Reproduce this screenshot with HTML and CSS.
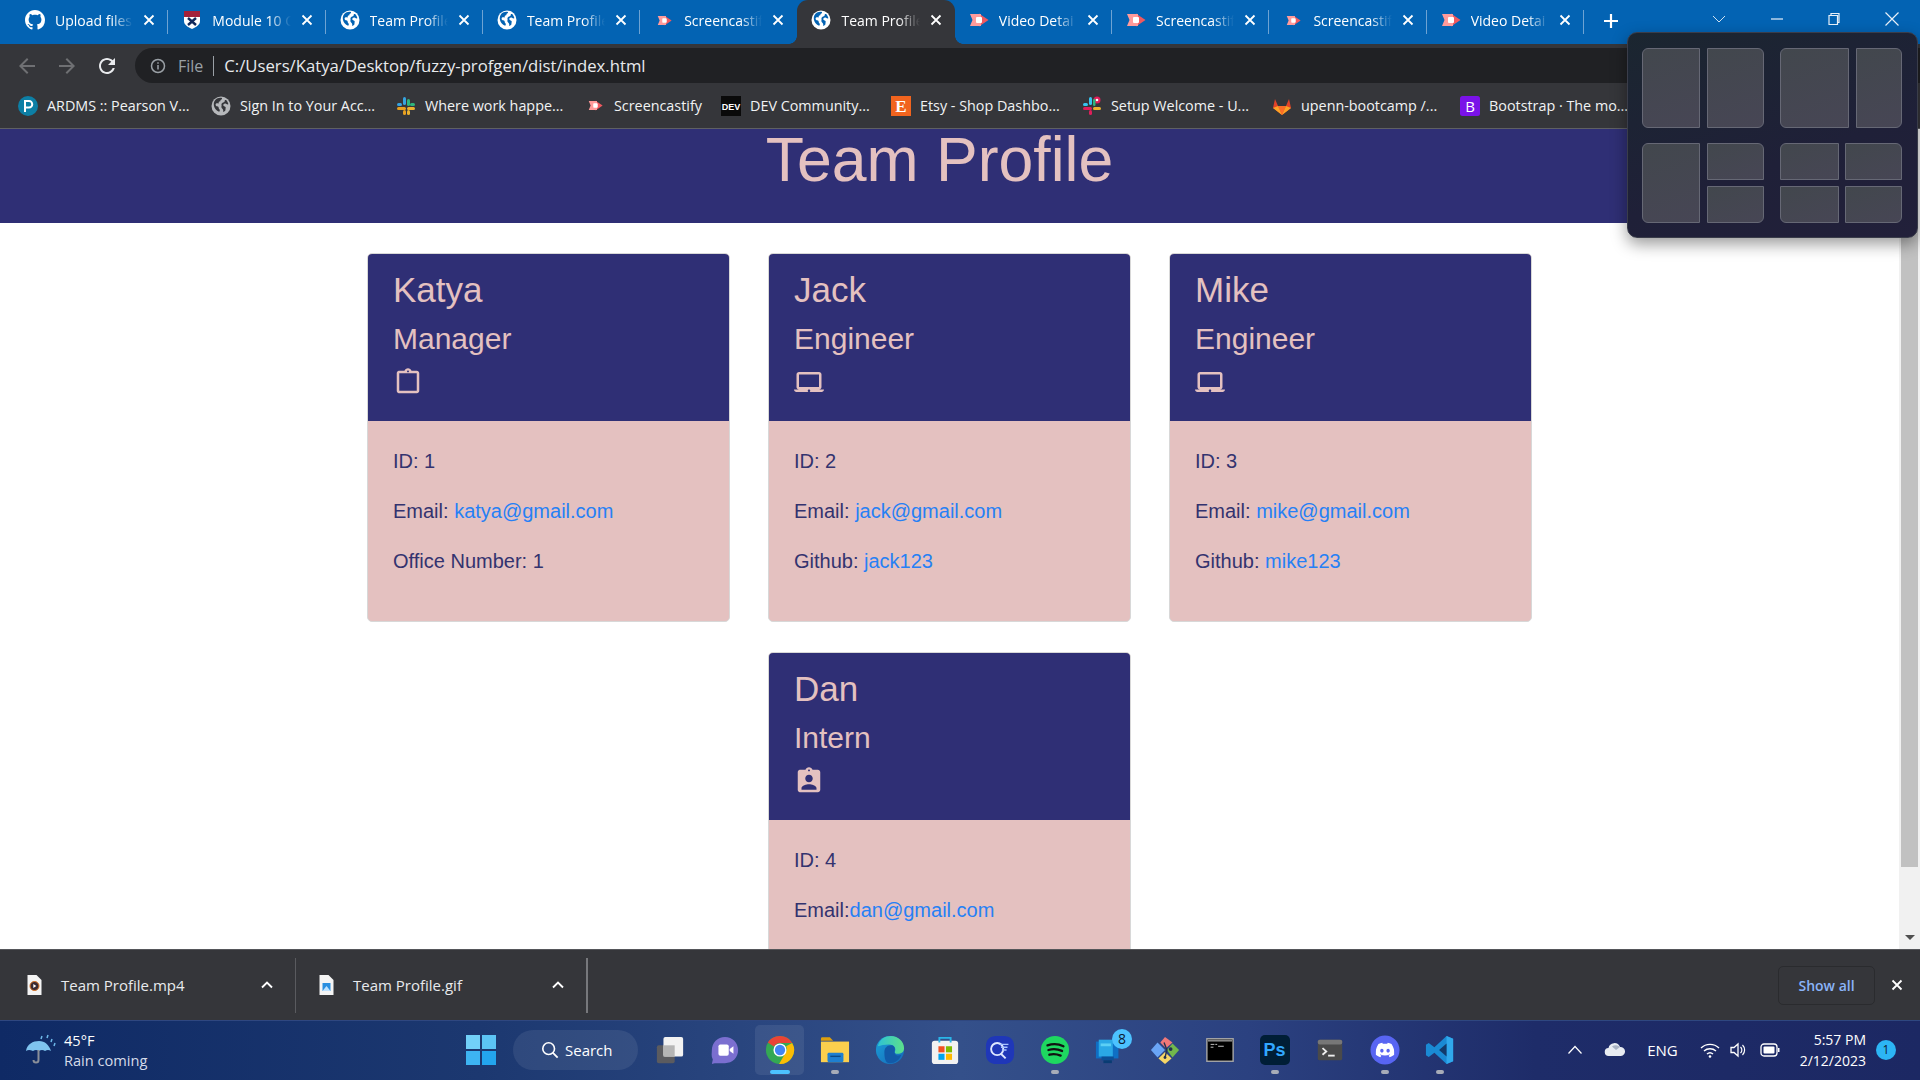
FILE: index.html
```html
<!DOCTYPE html>
<html lang="en">
<head>
<meta charset="utf-8">
<title>Team Profile</title>
<link rel="stylesheet" href="styles.css">
</head>
<body>
<svg class="sprite" xmlns="http://www.w3.org/2000/svg">
  <symbol id="i-github" viewBox="0 0 16 16"><path fill="#fff" d="M8 0C3.58 0 0 3.58 0 8c0 3.54 2.29 6.53 5.47 7.59.4.07.55-.17.55-.38 0-.19-.01-.82-.01-1.49-2.01.37-2.53-.49-2.69-.94-.09-.23-.48-.94-.82-1.13-.28-.15-.68-.52-.01-.53.63-.01 1.08.58 1.23.82.72 1.21 1.87.87 2.33.66.07-.52.28-.87.51-1.07-1.78-.2-3.64-.89-3.64-3.95 0-.87.31-1.59.82-2.15-.08-.2-.36-1.02.08-2.12 0 0 .67-.21 2.2.82.64-.18 1.32-.27 2-.27.68 0 1.36.09 2 .27 1.53-1.04 2.2-.82 2.2-.82.44 1.1.16 1.92.08 2.12.51.56.82 1.27.82 2.15 0 3.07-1.87 3.75-3.65 3.95.29.25.54.73.54 1.48 0 1.07-.01 1.93-.01 2.2 0 .21.15.46.55.38A8.013 8.013 0 0016 8c0-4.42-3.58-8-8-8z"/></symbol>
  <symbol id="i-globe" viewBox="0 0 20 20"><circle cx="10" cy="10" r="9.5" fill="currentColor"/><path fill="var(--land,#0363b3)" d="M6 2.5c2-.9 3.6-1 5-.6.3 1-.5 1.7-1.600 2 .4.9-.3 1.600-1.300 1.700-.6.6-.5 1.300-.1 1.800-1-.1-1.800-.5-2.500-.1-1 .5-1.200 1.700-.5 2.500.7.7 1.700.5 2.300 1 .6.600.2 1.300.7 2 .4.600.9.800.8 1.600-.1.600-.3 1-.7 1.300-2.500-.8-5-3.700-5.300-6.700C2.500 6.300 3.700 3.900 6 2.500zM15 4c1.300 1 2 2.700 2.400 4.300-.9.300-1.700-.2-2.400-.5-.9-.4-1.800-.2-2.400.4-.5.500-.3 1.400.2 1.900.5.500 1.300.5 1.700 1 .4.600.1 1.300 0 2-.1.600.1 1.200-.3 1.700-.6.500-1.300 1-2.100 1.200.2-1 .3-2-.3-2.800-.5-.7-1.300-1-1.400-1.900-.1-.8.200-1.500.200-2.200-.6-1 .3-1.800 1-2.300.7-.5 1.800-.4 2-1.300.1-.7.100-1 .4-1.500z"/></symbol>
  <symbol id="i-cast" viewBox="0 0 20 20"><path fill="#f0595f" d="M10 3.500L19.500 10 10 16.500z"/><path fill="#ff9b9b" d="M1 4h11v12H1l2.500-6z"/><rect x="7" y="7" width="6" height="6" rx="1" fill="#fff"/></symbol>
  <symbol id="i-close" viewBox="0 0 12 12"><path d="M1.500 1.500l9 9M10.500 1.500l-9 9" stroke="#fff" stroke-width="1.800" fill="none"/></symbol>
  <symbol id="i-laptop" viewBox="0 0 24 24"><path fill="currentColor" d="M20 18c1.100 0 1.990-.9 1.990-2L22 6c0-1.100-.9-2-2-2H4c-1.100 0-2 .9-2 2v10c0 1.100.9 2 2 2H0c0 1.100.9 2 2 2h20c1.100 0 2-.9 2-2h-4zM4 6h16v10H4V6zm8 14c-.55 0-1-.45-1-1s.45-1 1-1 1 .45 1 1-.45 1-1 1z"/></symbol>
  <symbol id="i-clip" viewBox="0 0 24 24"><path fill="currentColor" d="M19 3h-4.180C14.400 1.840 13.300 1 12 1c-1.300 0-2.400.84-2.820 2H5c-.14 0-.27.01-.4.04-.39.08-.74.28-1.010.55-.18.18-.33.4-.43.64-.1.23-.16.49-.16.77v14c0 .27.06.54.16.78s.25.45.43.64c.27.27.62.47 1.010.55.13.02.26.03.4.03h14c1.100 0 2-.9 2-2V5c0-1.100-.9-2-2-2zm-7-.25c.41 0 .75.34.75.75s-.34.75-.75.75-.75-.34-.75-.75.34-.75.75-.75zM19 19H5V5h14v14z"/></symbol>
  <symbol id="i-badge" viewBox="0 0 24 24"><path fill="currentColor" d="M19 3h-4.180C14.400 1.840 13.300 1 12 1c-1.300 0-2.400.84-2.820 2H5c-.14 0-.27.01-.4.04-.39.08-.74.28-1.010.55-.18.18-.33.4-.43.64-.1.23-.16.49-.16.77v14c0 .27.06.54.16.78s.25.45.43.64c.27.27.62.47 1.010.55.13.02.26.03.4.03h14c1.100 0 2-.9 2-2V5c0-1.100-.9-2-2-2zm-7-.25c.41 0 .75.34.75.75s-.34.75-.75.75-.75-.34-.75-.75.34-.75.75-.75zM12 7c1.660 0 3 1.340 3 3s-1.340 3-3 3-3-1.340-3-3 1.340-3 3-3zm6 12H6v-1.400c0-2 4-3.100 6-3.100s6 1.100 6 3.100V19z"/></symbol>
  <symbol id="i-up" viewBox="0 0 16 16"><path d="M3 10.500L8 5.500l5 5" stroke="#fff" stroke-width="1.900" fill="none"/></symbol>
</svg>

<div class="screen">
  <header class="tabstrip">
    <div class="tab"><svg class="fav"><use href="#i-github"/></svg><span class="tab-title">Upload files</span><svg class="tab-x"><use href="#i-close"/></svg></div>
    <div class="tab"><svg class="fav" viewBox="0 0 20 20"><path fill="#fff" d="M2 1h16v10c0 4-4 6-8 8-4-2-8-4-8-8z"/><rect x="2" y="1" width="16" height="6" fill="#a3213b"/><path d="M6 15l8-7M14 15L6 8" stroke="#12295c" stroke-width="2.400"/></svg><span class="tab-title">Module 10 C</span><svg class="tab-x"><use href="#i-close"/></svg></div>
    <div class="tab"><svg class="fav globe"><use href="#i-globe"/></svg><span class="tab-title">Team Profile</span><svg class="tab-x"><use href="#i-close"/></svg></div>
    <div class="tab"><svg class="fav globe"><use href="#i-globe"/></svg><span class="tab-title">Team Profile</span><svg class="tab-x"><use href="#i-close"/></svg></div>
    <div class="tab tab-before-active"><svg class="fav fav-sm"><use href="#i-cast"/></svg><span class="tab-title">Screencastif</span><svg class="tab-x"><use href="#i-close"/></svg></div>
    <div class="tab tab-active"><svg class="fav globe"><use href="#i-globe"/></svg><span class="tab-title">Team Profile</span><svg class="tab-x"><use href="#i-close"/></svg></div>
    <div class="tab"><svg class="fav"><use href="#i-cast"/></svg><span class="tab-title">Video Detai</span><svg class="tab-x"><use href="#i-close"/></svg></div>
    <div class="tab"><svg class="fav"><use href="#i-cast"/></svg><span class="tab-title">Screencastif</span><svg class="tab-x"><use href="#i-close"/></svg></div>
    <div class="tab"><svg class="fav fav-sm"><use href="#i-cast"/></svg><span class="tab-title">Screencastif</span><svg class="tab-x"><use href="#i-close"/></svg></div>
    <div class="tab"><svg class="fav"><use href="#i-cast"/></svg><span class="tab-title">Video Detai</span><svg class="tab-x"><use href="#i-close"/></svg></div>
    <svg class="newtab" viewBox="0 0 16 16"><path d="M8 1v14M1 8h14" stroke="#fff" stroke-width="2.200"/></svg>
    <div class="winctl">
      <svg class="win-icon" viewBox="0 0 16 16"><path d="M2 5l6 6 6-6" stroke="#cfe0f0" stroke-width="1" fill="none"/></svg>
      <svg class="win-icon" viewBox="0 0 16 16"><path d="M2 8h12" stroke="#e8f0f8" stroke-width="1.200"/></svg>
      <svg class="win-icon" viewBox="0 0 16 16"><path d="M3 4.500h8.500v9H3z M5 4.500V2.500h8v9h-1.500" stroke="#e8f0f8" stroke-width="1.200" fill="none"/></svg>
      <svg class="win-icon" viewBox="0 0 16 16"><path d="M1.500 1.500l13 13M14.500 1.500l-13 13" stroke="#e8f0f8" stroke-width="1.200"/></svg>
    </div>
  </header>

  <div class="toolbar">
    <svg class="nav" viewBox="0 0 24 24"><path fill="#6f7073" d="M20 11H7.830l5.590-5.590L12 4l-8 8 8 8 1.410-1.410L7.830 13H20v-2z"/></svg>
    <svg class="nav" viewBox="0 0 24 24"><path fill="#6f7073" d="M12 4l-1.410 1.410L16.170 11H4v2h12.170l-5.580 5.590L12 20l8-8z"/></svg>
    <svg class="nav" viewBox="0 0 24 24"><path fill="#e8eaed" d="M17.650 6.350C16.200 4.900 14.210 4 12 4c-4.420 0-7.990 3.580-7.990 8s3.570 8 7.990 8c3.730 0 6.840-2.550 7.730-6h-2.080c-.82 2.330-3.040 4-5.650 4-3.310 0-6-2.690-6-6s2.690-6 6-6c1.660 0 3.140.69 4.220 1.780L13 11h7V4l-2.350 2.350z"/></svg>
    <div class="omnibox">
      <svg class="info" viewBox="0 0 16 16"><circle cx="8" cy="8" r="6.500" stroke="#9aa0a6" stroke-width="1.500" fill="none"/><path d="M8 7v4.500M8 4.300v1.400" stroke="#9aa0a6" stroke-width="1.500"/></svg>
      <span class="scheme">File</span>
      <span class="omni-sep"></span>
      <span class="url">C:/Users/Katya/Desktop/fuzzy-profgen/dist/index.html</span>
    </div>
  </div>

  <nav class="bookmarks">
    <div class="bm"><svg class="bm-ico" viewBox="0 0 20 20"><circle cx="10" cy="10" r="10" fill="#0d7fa5"/><path d="M7 16V5h4a3.200 3.200 0 010 6.500H7" stroke="#fff" stroke-width="2" fill="none"/></svg><span>ARDMS :: Pearson V...</span></div>
    <div class="bm"><svg class="bm-ico globe-gray"><use href="#i-globe"/></svg><span>Sign In to Your Acc...</span></div>
    <div class="bm"><svg class="bm-ico" viewBox="0 0 20 20"><rect x="7" y="1" width="3" height="8" rx="1.500" fill="#36a3e0"/><rect x="1" y="7" width="5" height="3" rx="1.500" fill="#36a3e0"/><rect x="11" y="3" width="3" height="7" rx="1.500" fill="#2eb67d"/><rect x="14" y="7" width="5" height="3" rx="1.500" fill="#2eb67d"/><rect x="11" y="11" width="8" height="3" rx="1.500" fill="#ecb22e"/><rect x="11" y="14" width="3" height="5" rx="1.500" fill="#ecb22e"/><rect x="1" y="11" width="9" height="3" rx="1.500" fill="#e8a020"/><rect x="7" y="14" width="3" height="5" rx="1.500" fill="#e8a020"/></svg><span>Where work happe...</span></div>
    <div class="bm"><svg class="bm-ico bm-ico-sm"><use href="#i-cast"/></svg><span>Screencastify</span></div>
    <div class="bm"><svg class="bm-ico" viewBox="0 0 20 20"><rect width="20" height="20" fill="#0a0a0a"/><text x="10" y="13.500" text-anchor="middle" class="dev-mark">DEV</text></svg><span>DEV Community...</span></div>
    <div class="bm"><svg class="bm-ico" viewBox="0 0 20 20"><rect width="20" height="20" fill="#f1641e"/><text x="10" y="16" text-anchor="middle" class="etsy-mark">E</text></svg><span>Etsy - Shop Dashbo...</span></div>
    <div class="bm"><svg class="bm-ico" viewBox="0 0 20 20"><rect x="7" y="1" width="3" height="8" rx="1.500" fill="#36c5f0"/><rect x="1" y="7" width="5" height="3" rx="1.500" fill="#36c5f0"/><circle cx="15" cy="4" r="3.500" fill="#e01e5a"/><circle cx="15" cy="4" r="1.300" fill="#fff"/><rect x="11" y="3" width="2.500" height="7" rx="1.200" fill="#2eb67d"/><rect x="11" y="11" width="8" height="3" rx="1.500" fill="#ecb22e"/><rect x="1" y="11" width="9" height="3" rx="1.500" fill="#e01e5a"/><rect x="7" y="14" width="3" height="5" rx="1.500" fill="#e01e5a"/></svg><span>Setup Welcome - U...</span></div>
    <div class="bm"><svg class="bm-ico" viewBox="0 0 20 20"><path fill="#e24329" d="M10 19L1 12l2-9 3 7h8l3-7 2 9z"/><path fill="#fc6d26" d="M10 19L6 10h8z"/><path fill="#fca326" d="M1 12l9 7-4-9zM19 12l-9 7 4-9z"/></svg><span>upenn-bootcamp /...</span></div>
    <div class="bm"><svg class="bm-ico" viewBox="0 0 20 20"><rect width="20" height="20" rx="2.500" fill="#7a12e8"/><text x="10" y="15.500" text-anchor="middle" class="bs-mark">B</text></svg><span>Bootstrap · The mo...</span></div>
  </nav>

  <div class="viewport">
    <main class="page">
      <div class="banner"><h1 class="banner-title">Team Profile</h1></div>
      <div class="cards">
        <article class="card">
          <div class="card-head">
            <h3 class="card-name">Katya</h3>
            <h4 class="card-role">Manager</h4>
            <svg class="role-icon"><use href="#i-clip"/></svg>
          </div>
          <div class="card-body">
            <p>ID: 1</p>
            <p>Email: <a href="#">katya@gmail.com</a></p>
            <p>Office Number: 1</p>
          </div>
        </article>
        <article class="card">
          <div class="card-head">
            <h3 class="card-name">Jack</h3>
            <h4 class="card-role">Engineer</h4>
            <svg class="role-icon"><use href="#i-laptop"/></svg>
          </div>
          <div class="card-body">
            <p>ID: 2</p>
            <p>Email: <a href="#">jack@gmail.com</a></p>
            <p>Github: <a href="#">jack123</a></p>
          </div>
        </article>
        <article class="card">
          <div class="card-head">
            <h3 class="card-name">Mike</h3>
            <h4 class="card-role">Engineer</h4>
            <svg class="role-icon"><use href="#i-laptop"/></svg>
          </div>
          <div class="card-body">
            <p>ID: 3</p>
            <p>Email: <a href="#">mike@gmail.com</a></p>
            <p>Github: <a href="#">mike123</a></p>
          </div>
        </article>
        <article class="card">
          <div class="card-head">
            <h3 class="card-name">Dan</h3>
            <h4 class="card-role">Intern</h4>
            <svg class="role-icon"><use href="#i-badge"/></svg>
          </div>
          <div class="card-body">
            <p>ID: 4</p>
            <p>Email:<a href="#">dan@gmail.com</a></p>
          </div>
        </article>
      </div>
    </main>
    <div class="scrollbar">
      <div class="scroll-track"><div class="scroll-thumb"></div></div>
      <div class="scroll-down"></div>
    </div>
  </div>

  <div class="downloads">
    <div class="dl dl-first">
      <svg class="dl-ico" viewBox="0 0 14 20"><path fill="#f4f4f4" d="M0 0h9l5 5v15H0z"/><circle cx="7" cy="11" r="4.500" fill="#3a2a33" stroke="#d9701f" stroke-width="1"/><path d="M5.800 9v4l3-2z" fill="#fff"/></svg>
      <span class="dl-name">Team Profile.mp4</span>
      <svg class="dl-up"><use href="#i-up"/></svg>
    </div>
    <div class="dl dl-second">
      <svg class="dl-ico" viewBox="0 0 14 20"><path fill="#f4f4f4" d="M0 0h9l5 5v15H0z"/><rect x="3" y="8" width="8" height="8" fill="#2a8fe0"/><path d="M3 16l4-5 4 5z" fill="#bfe3ff"/></svg>
      <span class="dl-name">Team Profile.gif</span>
      <svg class="dl-up"><use href="#i-up"/></svg>
    </div>
    <div class="dl-right">
      <button class="show-all">Show all</button>
      <svg class="dl-close"><use href="#i-close"/></svg>
    </div>
  </div>

  <footer class="taskbar">
    <div class="weather">
      <svg class="weather-ico" viewBox="0 0 32 32"><path d="M2 17C3 10 9 7 15 7s10 4 12 10c-2-1.500-4-1.500-6 0-2-1.500-4-1.500-6 0-2-1.500-4-1.500-6 0-3-1.500-5-1.500-7 0z" fill="#7fc4ef"/><path d="M14.500 16v10a2.500 2.500 0 01-5 0" stroke="#8a8f99" stroke-width="2" fill="none"/><path d="M18 2l-1 3M24 1l-1 3M28 5l-1 3M31 9l-1 3" stroke="#6eb8e8" stroke-width="1.500"/></svg>
      <div class="weather-text"><span class="w-temp">45°F</span><span class="w-desc">Rain coming</span></div>
    </div>
    <svg class="start" viewBox="0 0 30 30"><rect width="14" height="14" fill="#72d0f8"/><rect x="16" width="14" height="14" fill="#5cc4f5"/><rect y="16" width="14" height="14" fill="#3db4f2"/><rect x="16" y="16" width="14" height="14" fill="#23a5ee"/></svg>
    <div class="search"><svg class="search-ico" viewBox="0 0 20 20"><circle cx="8.500" cy="8.500" r="6.500" stroke="#fff" stroke-width="1.800" fill="none"/><path d="M13 13l5.500 5.500" stroke="#fff" stroke-width="2"/></svg><span>Search</span></div>
    <div class="apps">
      <div class="app"><svg class="app-ico" viewBox="0 0 32 32"><rect x="2" y="11" width="19" height="19" rx="2" fill="#5b5b5f"/><rect x="9" y="2" width="21" height="21" rx="2" fill="#f2f2f2"/><rect x="9" y="11" width="12" height="12" fill="#b5b5b5"/></svg></div>
      <div class="app"><svg class="app-ico" viewBox="0 0 32 32"><path d="M16 2c8 0 14 6 14 14s-6 14-14 14H5l-3 1 1-5C1 23 2 19 2 16 2 8 8 2 16 2z" fill="#7b6fd0"/><rect x="9" y="10" width="11" height="12" rx="2" fill="#fff"/><path d="M21 15l4-3v8l-4-3z" fill="#fff"/></svg></div>
      <div class="app app-active"><svg class="app-ico" viewBox="0 0 32 32"><circle cx="16" cy="16" r="15" fill="#34a853"/><path d="M16 1a15 15 0 0113 7.500H16a7.500 7.500 0 00-6.500 3.750L3 8A15 15 0 0116 1z" fill="#ea4335"/><path d="M29 8.500A15 15 0 0115 31l6.500-11.250A7.500 7.500 0 0022.500 12z" fill="#fbbc05"/><circle cx="16" cy="16" r="7" fill="#fff"/><circle cx="16" cy="16" r="5.500" fill="#4285f4"/></svg></div>
      <div class="app app-run"><svg class="app-ico" viewBox="0 0 32 32"><path d="M1 4a1.500 1.500 0 011.500-1.500h8L14 6h-13z" fill="#dd9f0e"/><path d="M1 7h30v22H1z" fill="#fbcf4d"/><rect x="8" y="19" width="17" height="10" rx="1.500" fill="#1e7fd0"/><rect x="11" y="22" width="11" height="1.500" fill="#0c4a86"/></svg></div>
      <div class="app"><svg class="app-ico" viewBox="0 0 32 32"><defs><linearGradient id="edge-a" x1="0" y1="0" x2="1" y2="1"><stop offset="0" stop-color="#1aa0d8"/><stop offset="1" stop-color="#1668b8"/></linearGradient><linearGradient id="edge-b" x1="0" y1="0" x2="1" y2="0"><stop offset="0" stop-color="#2fc2d4"/><stop offset="1" stop-color="#5de08a"/></linearGradient></defs><circle cx="16" cy="16" r="15" fill="url(#edge-a)"/><path d="M3 12C5 4 11 1 17 1c8 0 14 6 14 13 0 4-3 6-7 6-2 0-3-1-3-2 2-3 0-8-6-8-5 0-9 1-12 2z" fill="url(#edge-b)"/><path d="M10 18c0-4 3-7 7-7 3 0 5 2 4 6-1 4 3 6 7 4-2 6-7 9-12 9-4 0-6-3-6-12z" fill="#125aa8"/></svg></div>
      <div class="app"><svg class="app-ico" viewBox="0 0 32 32"><rect x="2" y="6" width="28" height="25" rx="3" fill="#f2f2f2"/><path d="M10 8V3h12v5" stroke="#2ab5e8" stroke-width="2" fill="none"/><rect x="9" y="12" width="6.500" height="6.500" fill="#f25022"/><rect x="17" y="12" width="6.500" height="6.500" fill="#7fba00"/><rect x="9" y="20" width="6.500" height="6.500" fill="#00a4ef"/><rect x="17" y="20" width="6.500" height="6.500" fill="#ffb900"/></svg></div>
      <div class="app"><svg class="app-ico" viewBox="0 0 32 32"><path d="M12 1h8c7 0 11 4 11 11v8c0 7-4 11-11 11h-8C5 31 1 27 1 20v-8C1 5 5 1 12 1z" fill="#1f37b8"/><circle cx="13" cy="15" r="6.500" stroke="#dfe8ff" stroke-width="2" fill="none"/><path d="M17 20l5 5" stroke="#dfe8ff" stroke-width="2"/><path d="M15 10h10M17 13h7M18 16h5" stroke="#a9c4ff" stroke-width="1.500"/></svg></div>
      <div class="app app-run"><svg class="app-ico" viewBox="0 0 32 32"><circle cx="16" cy="16" r="15" fill="#1ed760"/><path d="M8 11c6-2 12-1.500 17 1M9 16c5-1.500 10-1 14.500 1M10 21c4-1 8-.7 12 1" stroke="#111" stroke-width="2.500" stroke-linecap="round" fill="none"/></svg></div>
      <div class="app"><svg class="app-ico" viewBox="0 0 32 32"><rect x="1" y="7" width="24" height="18" fill="#0f6fc4"/><rect x="4" y="5" width="15" height="18" fill="#2aa8e6"/><rect x="6" y="9" width="11" height="3" fill="#5cd0f5"/><rect x="7" y="23" width="13" height="4" fill="#0c4f96"/><rect x="9" y="27" width="9" height="3" fill="#093c73"/></svg><span class="app-badge">8</span></div>
      <div class="app"><svg class="app-ico" viewBox="0 0 32 32"><path d="M16 16L8 8l-7 8 7 8z" fill="#6aa5f5"/><path d="M17 14l-6-6 5-6 8 6z" fill="#f07878"/><path d="M18 16l6-7 7 7-7 8z" fill="#72b84c"/><path d="M16 18l-7 7 7 6 7-6z" fill="#f6d667"/><path d="M15 8l3 8-2 8" stroke="#23304f" stroke-width="1.500" fill="none"/><circle cx="16" cy="24" r="1.500" fill="#23304f"/><circle cx="22" cy="15" r="2" fill="#23304f"/></svg></div>
      <div class="app"><svg class="app-ico" viewBox="0 0 32 32"><rect x="2" y="4" width="28" height="24" fill="#000" stroke="#a8a8a8" stroke-width="1.500"/><rect x="3" y="5" width="26" height="2" fill="#888"/><path d="M6 10h4M11 10h2M6 13h3M14 12h6" stroke="#ccc" stroke-width="1"/></svg></div>
      <div class="app app-run"><div class="ps-ico">Ps</div></div>
      <div class="app"><svg class="app-ico" viewBox="0 0 32 32"><rect x="3" y="5" width="26" height="22" rx="2" fill="#4a4a4a"/><rect x="3" y="5" width="26" height="5" rx="2" fill="#777"/><path d="M8 14l4 3.500-4 3.500" stroke="#eee" stroke-width="2" fill="none"/><path d="M14 22h7" stroke="#eee" stroke-width="2"/></svg></div>
      <div class="app app-run"><svg class="app-ico" viewBox="0 0 32 32"><circle cx="16" cy="16" r="15.500" fill="#5865f2"/><svg x="6" y="6" width="20" height="20" viewBox="0 0 24 24"><path fill="#fff" d="M20.317 4.3698a19.7913 19.7913 0 00-4.8851-1.5152.0741.0741 0 00-.0785.0371c-.211.3753-.4447.8648-.6083 1.2495-1.8447-.2762-3.68-.2762-5.4868 0-.1636-.3933-.4058-.8742-.6177-1.2495a.077.077 0 00-.0785-.037 19.7363 19.7363 0 00-4.8852 1.515.0699.0699 0 00-.0321.0277C.5334 9.0458-.319 13.5799.0992 18.0578a.0824.0824 0 00.0312.0561c2.0528 1.5076 4.0413 2.4228 5.9929 3.0294a.0777.0777 0 00.0842-.0276c.4616-.6304.8731-1.2952 1.226-1.9942a.076.076 0 00-.0416-.1057c-.6528-.2476-1.2743-.5495-1.8722-.8923a.077.077 0 01-.0076-.1277c.1258-.0943.2517-.1923.3718-.2914a.0743.0743 0 01.0776-.0105c3.9278 1.7933 8.18 1.7933 12.0614 0a.0739.0739 0 01.0785.0095c.1202.099.246.1981.3728.2924a.077.077 0 01-.0066.1276 12.2986 12.2986 0 01-1.8732.8914.0766.0766 0 00-.0407.1067c.3604.698.7719 1.3628 1.225 1.9932a.076.076 0 00.0842.0286c1.961-.6067 3.9495-1.5219 6.0023-3.0294a.077.077 0 00.0313-.0552c.5004-5.177-.8382-9.6739-3.5485-13.6604a.061.061 0 00-.0312-.0286zM8.02 15.3312c-1.1825 0-2.1569-1.0857-2.1569-2.419 0-1.3332.9555-2.4189 2.157-2.4189 1.2108 0 2.1757 1.0952 2.1568 2.419 0 1.3332-.9555 2.4189-2.1569 2.4189zm7.9748 0c-1.1825 0-2.1569-1.0857-2.1569-2.419 0-1.3332.9554-2.4189 2.1569-2.4189 1.2108 0 2.1757 1.0952 2.1568 2.419 0 1.3332-.946 2.4189-2.1568 2.4189z"/></svg></svg></div>
      <div class="app app-run"><svg class="app-ico" viewBox="0 0 32 32"><path d="M23 1l7 3v24l-7 3L10 19l-6 4.500-3-2V10.500l3-2L10 13z" fill="#1a8ad4"/><path d="M23 1l7 3v24l-7 3z" fill="#30a8ec"/><path d="M23 9l-8 7 8 7z" fill="#123a6b"/></svg></div>
    </div>
    <div class="tray">
      <svg class="tray-up" viewBox="0 0 16 16"><path d="M1.500 11.500L8 4.500l6.500 7" stroke="#fff" stroke-width="1.200" fill="none"/></svg>
      <svg class="tray-cloud" viewBox="0 0 22 14"><path d="M5 13a4 4 0 01-.5-8A6 6 0 0116 4a4.500 4.500 0 011 9z" fill="#e8ecf2"/><path d="M8 3.500A6 6 0 0116 4l-4 3z" fill="#a9b3c4"/></svg>
      <span class="tray-lang">ENG</span>
      <svg class="tray-wifi" viewBox="0 0 20 16"><path d="M1 6a13 13 0 0118 0M4 9a9 9 0 0112 0M7 12a4.500 4.500 0 016 0" stroke="#fff" stroke-width="1.400" fill="none"/><circle cx="10" cy="14.500" r="1.300" fill="#fff"/></svg>
      <svg class="tray-vol" viewBox="0 0 20 16"><path d="M2 5.500h3L9 2v12l-4-3.500H2z" stroke="#fff" stroke-width="1.300" fill="none"/><path d="M11.500 5a4 4 0 010 6M13.500 3a7 7 0 010 10" stroke="#fff" stroke-width="1.200" fill="none"/></svg>
      <svg class="tray-batt" viewBox="0 0 20 14"><rect x="1" y="1" width="16" height="12" rx="3" stroke="#fff" stroke-width="1.300" fill="none"/><rect x="3.500" y="3.500" width="11" height="7" rx="1" fill="#fff"/><rect x="18" y="5" width="1.500" height="4" fill="#fff"/></svg>
      <div class="clock"><span>5:57 PM</span><span>2/12/2023</span></div>
      <span class="notif">1</span>
    </div>
  </footer>

  <aside class="snap">
    <div class="snap-layout snap-l1"><i></i><i></i></div>
    <div class="snap-layout snap-l2"><i></i><i></i></div>
    <div class="snap-layout snap-l3"><i class="span2"></i><i></i><i></i></div>
    <div class="snap-layout snap-l4"><i></i><i></i><i></i><i></i></div>
  </aside>
</div>
</body>
</html>
```

FILE: styles.css
```css
* { box-sizing: border-box; }
html, body { margin: 0; padding: 0; height: 100%; overflow: hidden; }
body { font-family: "Liberation Sans", Arial, sans-serif; }
.sprite { display: none; }

.screen {
  position: relative;
  width: 1920px;
  height: 1080px;
  display: flex;
  flex-direction: column;
  overflow: hidden;
  background: #fff;
}

/* tab strip */
.tabstrip {
  height: 44px;
  flex: none;
  display: flex;
  align-items: stretch;
  padding-left: 11px;
  background: #0363b3;
  font-family: "Open Sans", sans-serif;
  color: #fff;
}
.tab {
  position: relative;
  width: 157.3px;
  flex: none;
  display: flex;
  align-items: center;
  padding: 0 11px 4px 14px;
  gap: 10px;
}
.tab::after {
  content: "";
  position: absolute;
  right: 0;
  top: 10px;
  height: 24px;
  width: 1px;
  background: #6ea3d3;
}
.tab-before-active::after { display: none; }
.tab-active::after { display: none; }
.tab-active {
  background: #35363a;
  border-radius: 11px 11px 0 0;
  box-shadow: -7px 7px 0 -7px #35363a;
}
.tab-active::before {
  content: "";
  position: absolute;
  left: -8px;
  right: -8px;
  bottom: 0;
  height: 8px;
  z-index: 0;
  background:
    radial-gradient(circle at 0 0, #0363b3 7.5px, #35363a 8px) left bottom / 8px 8px no-repeat,
    radial-gradient(circle at 100% 0, #0363b3 7.5px, #35363a 8px) right bottom / 8px 8px no-repeat;
}
.fav { width: 20px; height: 20px; flex: none; position: relative; }
.fav-sm { width: 15px; height: 15px; margin: 0 2.5px; }
.globe { color: #fff; }
.tab-title {
  flex: 1;
  min-width: 0;
  font-size: 14px;
  white-space: nowrap;
  overflow: hidden;
  -webkit-mask-image: linear-gradient(90deg, #000 72%, transparent 100%);
  mask-image: linear-gradient(90deg, #000 72%, transparent 100%);
  position: relative;
}
.tab-x { width: 12px; height: 12px; flex: none; margin-right: 2px; position: relative; }
.newtab { width: 16px; height: 16px; flex: none; margin: 13px 0 0 19px; }
.winctl {
  flex: 1;
  display: flex;
  align-items: flex-start;
  justify-content: flex-end;
  gap: 41.7px;
  padding: 11px 20px 0 0;
}
.win-icon { width: 16px; height: 16px; flex: none; }

/* toolbar */
.toolbar {
  height: 40px;
  flex: none;
  display: flex;
  align-items: center;
  padding: 4px 0 1px 15px;
  gap: 16px;
  background: #35363a;
}
.nav { width: 24px; height: 24px; flex: none; }
.omnibox {
  flex: 1;
  height: 35px;
  display: flex;
  align-items: center;
  padding-left: 15px;
  border-radius: 18px 0 0 18px;
  background: #202124;
  font-family: "Open Sans", sans-serif;
}
.info { width: 16px; height: 16px; flex: none; }
.scheme { margin-left: 12px; font-size: 16px; color: #9aa0a6; }
.omni-sep { width: 1px; height: 20px; margin: 0 10px 0 10px; background: #9aa0a6; }
.url { font-size: 16.7px; color: #e8eaed; white-space: nowrap; }

/* bookmarks */
.bookmarks {
  height: 45px;
  flex: none;
  display: grid;
  grid-template-columns: 193px 185px 189px 136px 170px 191px 190px 188px 200px;
  align-items: center;
  padding: 0 0 1px 18px;
  background: #35363a;
  border-bottom: 1px solid #5f6063;
  font-family: "Open Sans", sans-serif;
  font-size: 14.35px;
  color: #f1f3f4;
}
.bm { display: flex; align-items: center; gap: 9px; white-space: nowrap; }
.bm-ico { width: 20px; height: 20px; flex: none; }
.bm-ico-sm { width: 15px; height: 15px; margin: 0 2.5px; }
.globe-gray { color: #b6b8bb; --land: #35363a; }
.dev-mark { font: bold 9px "Liberation Sans", sans-serif; fill: #fff; }
.etsy-mark { font: bold 17px "Liberation Serif", serif; fill: #fff; }
.bs-mark { font: 15px "Open Sans", sans-serif; fill: #fff; }

/* page */
.viewport { flex: 1; min-height: 0; display: flex; overflow: hidden; }
.page { flex: 1; min-width: 0; overflow: hidden; background: #fff; }
.banner {
  height: 94px;
  background: #2f2f75;
  padding-right: 20px;
  text-align: center;
}
.banner-title {
  margin: 0;
  font-size: 62.5px;
  line-height: 60px;
  font-weight: 400;
  color: #e4c1c0;
}
.cards {
  width: 1165px;
  margin: 30px auto 0;
  display: flex;
  flex-wrap: wrap;
  justify-content: center;
  gap: 30px 38px;
}
.card {
  width: 363px;
  flex: none;
  border: 1px solid #d8d8d8;
  border-radius: 5px;
  overflow: hidden;
  background: #e4c1c0;
}
.card-head {
  height: 167px;
  padding: 15px 25px 0 25px;
  background: #2f2f75;
  color: #e4c1c0;
}
.card-name { margin: 0 0 10px; font-size: 35px; line-height: 42px; font-weight: 400; }
.card-role { margin: 0 0 10px; font-size: 30px; line-height: 36px; font-weight: 400; }
.role-icon { display: block; width: 30px; height: 30px; color: #e4c1c0; }
.card-body {
  height: 200px;
  padding: 25px;
  color: #33336f;
  font-size: 20px;
  line-height: 30px;
}
.card-body p { margin: 0 0 20px; }
.card-body a { color: #2680f5; text-decoration: none; }

.scrollbar {
  width: 21px;
  flex: none;
  display: flex;
  flex-direction: column;
  background: #f1f1f1;
}
.scroll-track { flex: 1; padding: 0 2px; }
.scroll-thumb { height: 738px; background: #c1c1c1; }
.scroll-down {
  align-self: center;
  flex: none;
  width: 0;
  height: 0;
  margin-bottom: 9px;
  border-left: 5px solid transparent;
  border-right: 5px solid transparent;
  border-top: 5px solid #505050;
}

/* downloads bar */
.downloads {
  height: 71px;
  flex: none;
  display: flex;
  align-items: center;
  background: #35363a;
  border-top: 1px solid #55565a;
  font-family: "Open Sans", sans-serif;
  color: #e8eaed;
}
.dl {
  height: 55px;
  display: flex;
  align-items: center;
  border-right: 1px solid #5a5b5f;
}
.dl-first { width: 296px; padding: 0 20px 0 27px; }
.dl-second { width: 292px; padding: 0 20px 0 23px; border-right: 2px solid #77787c; }
.dl-ico { width: 15px; height: 20px; flex: none; margin-right: 19px; }
.dl-name { flex: 1; font-size: 15px; white-space: nowrap; }
.dl-up { width: 16px; height: 16px; flex: none; }
.dl-right { margin-left: auto; display: flex; align-items: center; gap: 16px; padding-right: 17px; }
.show-all {
  width: 97px;
  height: 39px;
  padding: 0;
  background: transparent;
  border: 1px solid #2a2b2e;
  border-radius: 5px;
  color: #8ab4f8;
  font: 600 14px "Open Sans", sans-serif;
}
.dl-close { width: 12px; height: 12px; flex: none; }

/* taskbar */
.taskbar {
  height: 60px;
  flex: none;
  display: flex;
  align-items: center;
  padding: 0 0 2px 24px;
  background: linear-gradient(90deg, #0f2a65 0%, #1c3870 25%, #34508a 50%, #2b4180 65%, #1e2c69 80%, #1c2863 100%);
  border-top: 1px solid #2f4780;
  font-family: "Open Sans", sans-serif;
  color: #fff;
}
.weather { width: 442px; flex: none; display: flex; align-items: center; gap: 8px; }
.weather-ico { width: 32px; height: 32px; flex: none; }
.weather-text { display: flex; flex-direction: column; line-height: 20px; font-size: 14.6px; }
.w-desc { color: #d6dbe8; }
.start { width: 30px; height: 30px; flex: none; }
.search {
  width: 125px;
  height: 40px;
  margin: 0 4px 0 17px;
  flex: none;
  display: flex;
  align-items: center;
  gap: 6px;
  padding-left: 29px;
  border-radius: 20px;
  background: rgba(255, 255, 255, .08);
  font-size: 15px;
}
.search-ico { width: 18px; height: 18px; flex: none; margin-left: -1px; }
.apps { display: flex; flex: none; }
.app {
  position: relative;
  width: 55px;
  height: 50px;
  flex: none;
  display: flex;
  align-items: center;
  justify-content: center;
  border-radius: 5px;
}
.app-ico { width: 30px; height: 30px; flex: none; }
.app-run::after {
  content: "";
  position: absolute;
  left: 24px;
  bottom: 1px;
  width: 8px;
  height: 4px;
  border-radius: 2px;
  background: #a7acb8;
}
.app-active::before {
  content: "";
  position: absolute;
  inset: 0 3px;
  border-radius: 5px;
  background: rgba(255, 255, 255, .08);
}
.app-active .app-ico { position: relative; }
.app-active::after {
  content: "";
  position: absolute;
  left: 18px;
  bottom: 1px;
  width: 20px;
  height: 4px;
  border-radius: 2px;
  background: #4cc2ff;
}
.app-badge {
  position: absolute;
  left: 30px;
  top: 4px;
  width: 20px;
  height: 20px;
  border-radius: 50%;
  background: #4cc2ff;
  color: #0d1a33;
  font-size: 14px;
  line-height: 20px;
  text-align: center;
}
.ps-ico {
  width: 30px;
  height: 30px;
  border-radius: 5px;
  background: #001e36;
  color: #31a8ff;
  font: bold 18px/30px "Liberation Sans", sans-serif;
  text-align: center;
}
.tray { margin-left: auto; display: flex; align-items: center; flex: none; padding-right: 24px; }
.tray-up { width: 16px; height: 16px; margin-right: 21px; }
.tray-cloud { width: 22px; height: 14px; margin-right: 21px; }
.tray-lang { font-size: 15px; margin-right: 22px; }
.tray-wifi { width: 20px; height: 16px; margin-right: 9px; }
.tray-vol { width: 20px; height: 16px; margin-right: 11px; }
.tray-batt { width: 20px; height: 14px; margin-right: 20px; }
.clock { display: flex; flex-direction: column; align-items: flex-end; font-size: 14px; line-height: 21px; }
.notif {
  width: 20px;
  height: 20px;
  margin-left: 10px;
  border-radius: 50%;
  background: #2cb5f5;
  color: #0d1a33;
  font-size: 12px;
  line-height: 20px;
  text-align: center;
}

/* snap layouts flyout */
.snap {
  position: absolute;
  left: 1627px;
  top: 32px;
  width: 291px;
  height: 206px;
  display: grid;
  grid-template-columns: 122px 122px;
  grid-template-rows: 80px 80px;
  gap: 15px 16px;
  padding: 15px 14px;
  border: 1px solid #3a3d4a;
  border-radius: 10px;
  background: linear-gradient(160deg, #1b2630 0%, #1f2038 60%, #22203a 100%);
  box-shadow: 0 6px 16px rgba(0, 0, 0, .4);
}
.snap-layout { display: grid; gap: 6px 7px; }
.snap-layout i {
  display: block;
  background: linear-gradient(160deg, #42474d, #474655);
  border: 1px solid #666875;
}
.snap-l1 { grid-template-columns: 58px 57px; }
.snap-l2 { grid-template-columns: 69px 46px; }
.snap-l3 { grid-template-columns: 58px 57px; grid-template-rows: 37px 37px; }
.snap-l4 { grid-template-columns: 59px 57px; grid-template-rows: 37px 37px; gap: 6px 6px; }
.span2 { grid-row: span 2; }
.snap-l1 i:first-child, .snap-l2 i:first-child, .snap-l3 i:first-child { border-radius: 6px 0 0 6px; }
.snap-l1 i:last-child, .snap-l2 i:last-child { border-radius: 0 6px 6px 0; }
.snap-l3 i:nth-child(2) { border-radius: 0 6px 0 0; }
.snap-l3 i:nth-child(3) { border-radius: 0 0 6px 0; }
.snap-l4 i:nth-child(1) { border-radius: 6px 0 0 0; }
.snap-l4 i:nth-child(2) { border-radius: 0 6px 0 0; }
.snap-l4 i:nth-child(3) { border-radius: 0 0 0 6px; }
.snap-l4 i:nth-child(4) { border-radius: 0 0 6px 0; }
```
